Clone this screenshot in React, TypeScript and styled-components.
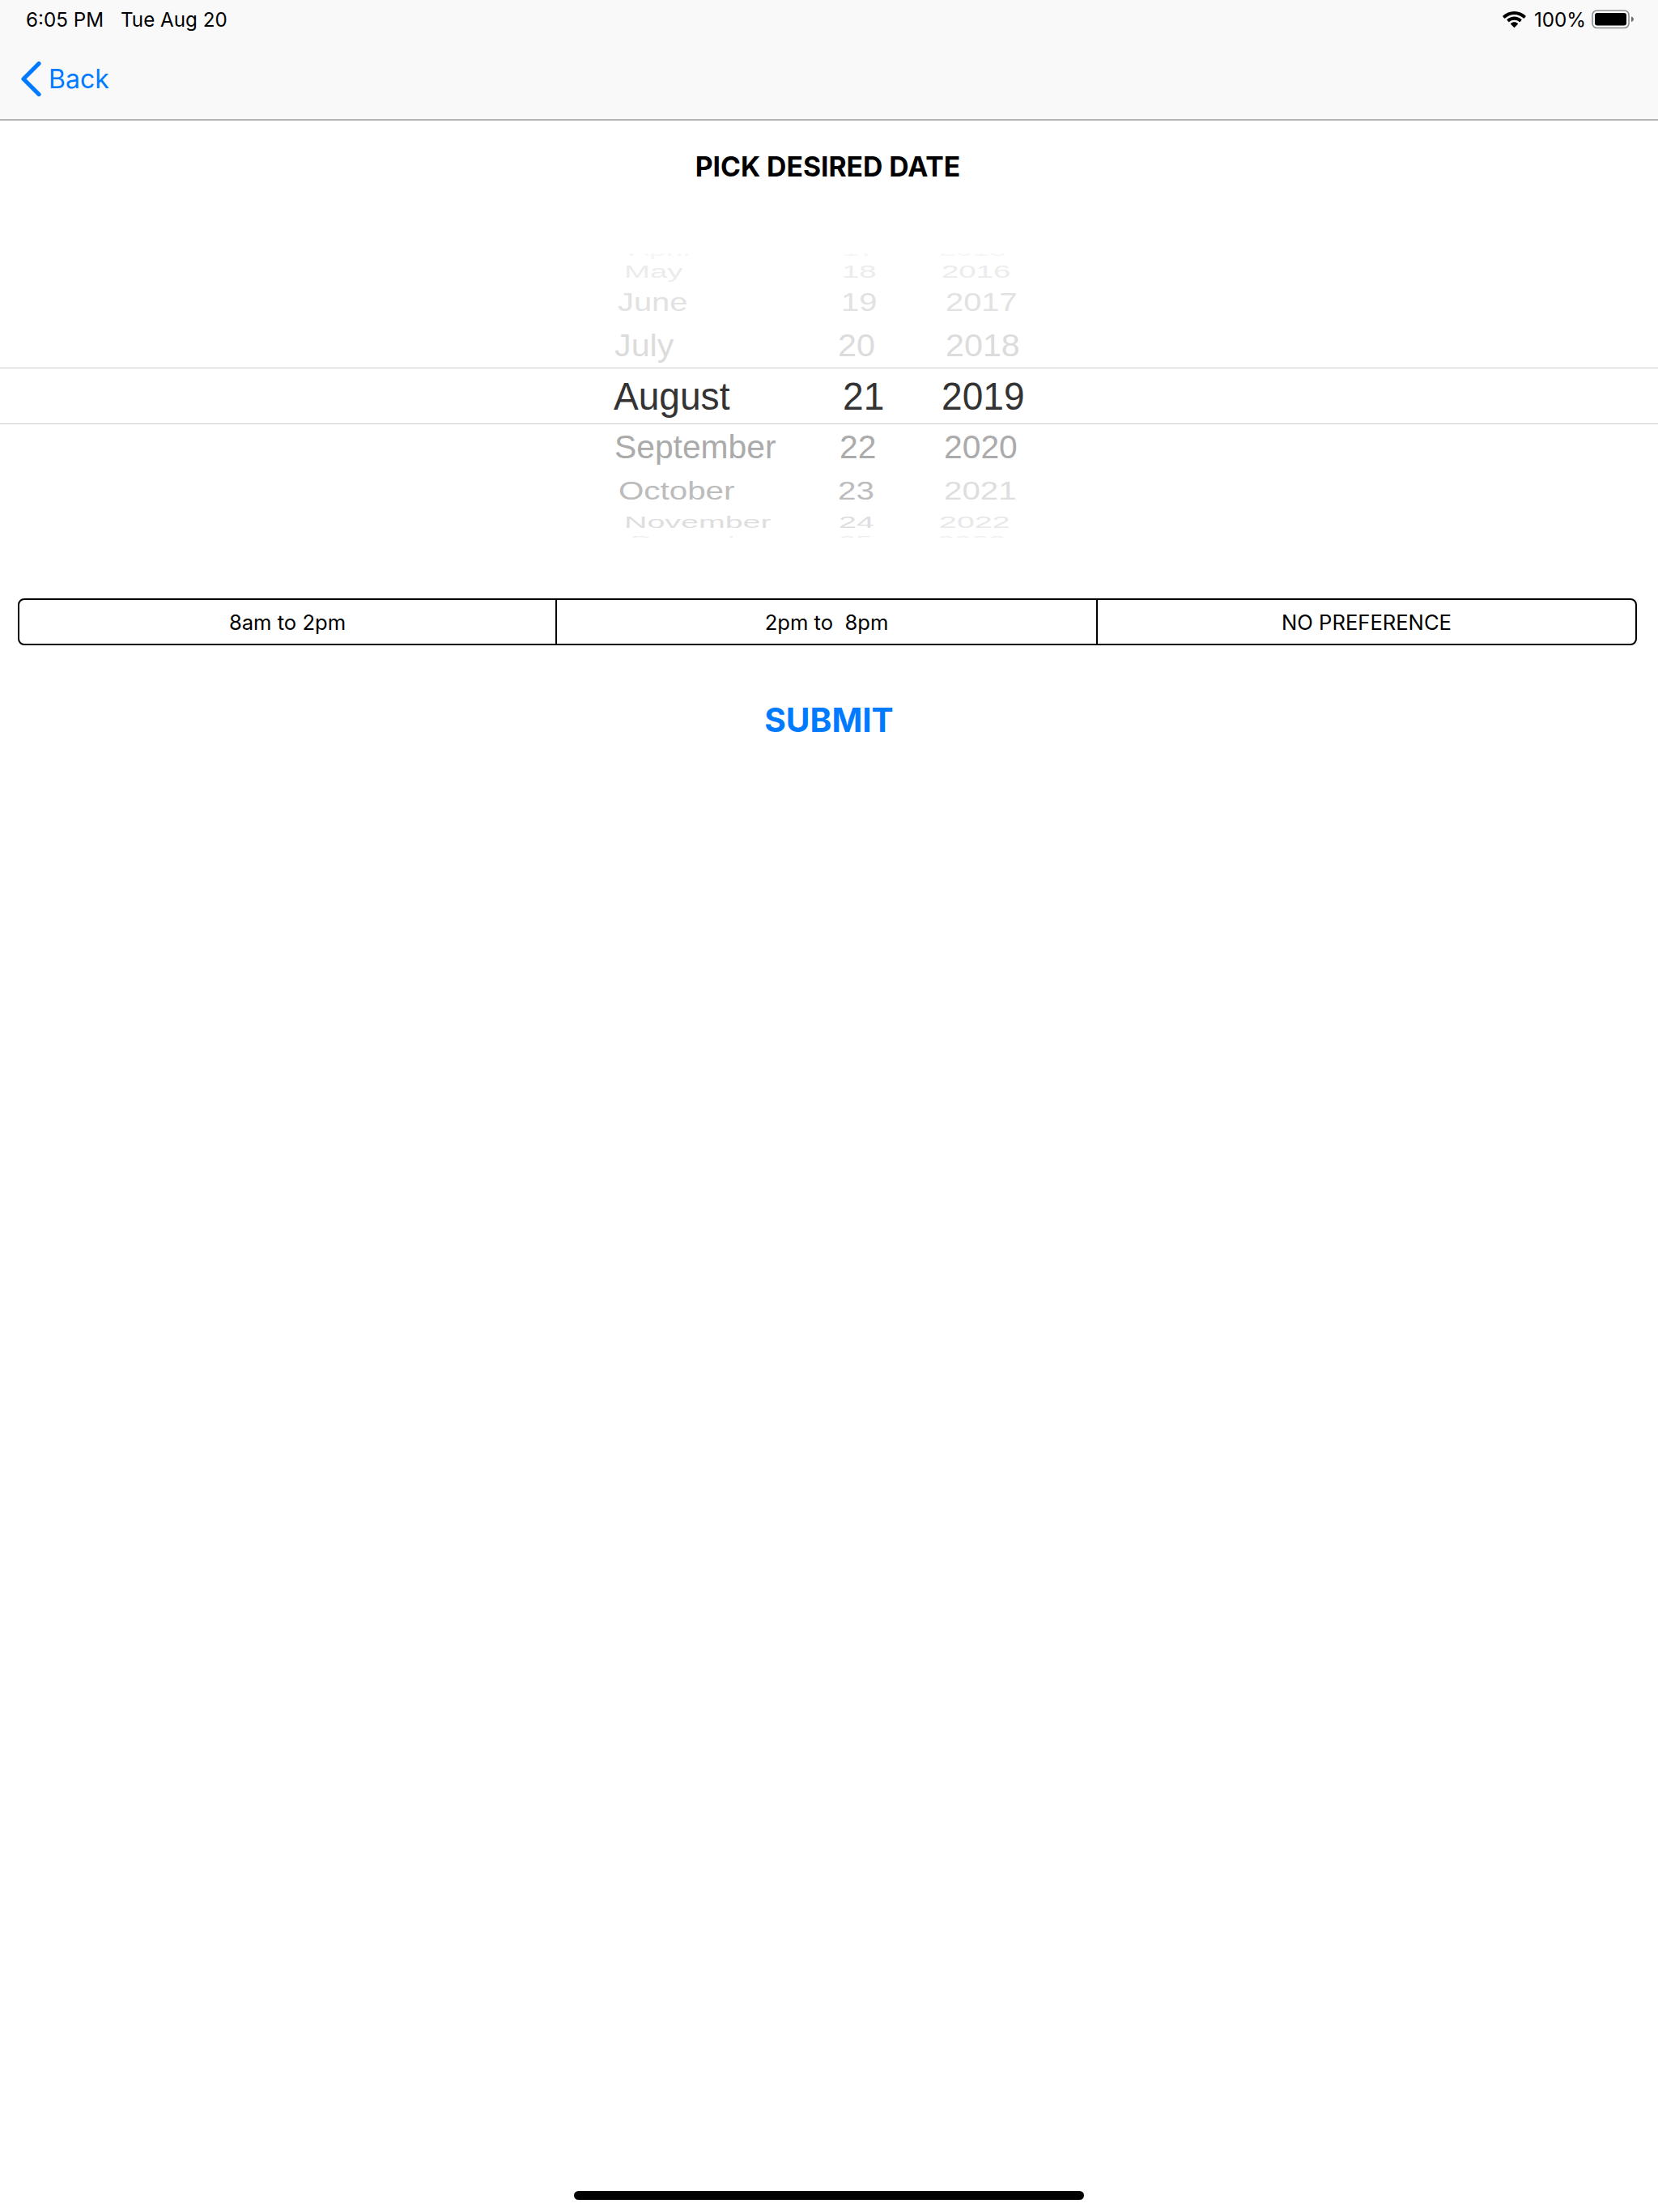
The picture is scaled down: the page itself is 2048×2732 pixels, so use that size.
import React from "react";
import styled, { createGlobalStyle } from "styled-components";

interface WheelCell {
    text: string;
    x: number;
    color: string;
}

// one entry per visible row, top to bottom: height of the row and how much the drum squeezes it
const ROW_SHAPES = [
    { height: 21, sx: 0.78, sy: 0.4 },
    { height: 32, sx: 0.8, sy: 0.44 },
    { height: 42, sx: 0.83, sy: 0.67 },
    { height: 66, sx: 0.86, sy: 0.81 },
    { height: 60, sx: 0.96, sy: 1 },
    { height: 66, sx: 0.85, sy: 0.84 },
    { height: 42, sx: 0.84, sy: 0.64 },
    { height: 33, sx: 0.82, sy: 0.41 },
    { height: 14, sx: 0.79, sy: 0.35 },
];

const MONTHS: WheelCell[] = [
    { text: "April", x: 777, color: "#f6f6f6" },
    { text: "May", x: 771, color: "#ececec" },
    { text: "June", x: 763, color: "#e2e2e2" },
    { text: "July", x: 759, color: "#dcdcdc" },
    { text: "August", x: 758, color: "#333333" },
    { text: "September", x: 759, color: "#ababab" },
    { text: "October", x: 764, color: "#bcbcbc" },
    { text: "November", x: 771, color: "#dedede" },
    { text: "December", x: 779, color: "#eeeeee" },
];

const DAYS: WheelCell[] = [
    { text: "17", x: 1040, color: "#f6f6f6" },
    { text: "18", x: 1040, color: "#ececec" },
    { text: "19", x: 1039, color: "#e2e2e2" },
    { text: "20", x: 1035, color: "#dcdcdc" },
    { text: "21", x: 1041, color: "#333333" },
    { text: "22", x: 1037, color: "#ababab" },
    { text: "23", x: 1035, color: "#bcbcbc" },
    { text: "24", x: 1036, color: "#dedede" },
    { text: "25", x: 1036, color: "#eeeeee" },
];

const YEARS: WheelCell[] = [
    { text: "2015", x: 1160, color: "#f6f6f6" },
    { text: "2016", x: 1163, color: "#ececec" },
    { text: "2017", x: 1168, color: "#e2e2e2" },
    { text: "2018", x: 1168, color: "#dcdcdc" },
    { text: "2019", x: 1163, color: "#333333" },
    { text: "2020", x: 1166, color: "#ababab" },
    { text: "2021", x: 1166, color: "#dedede" },
    { text: "2022", x: 1160, color: "#e8e8e8" },
    { text: "2023", x: 1158, color: "#f0f0f0" },
];

const WHEEL_START = 750;

const WHEELS = [
    { cells: MONTHS, start: WHEEL_START, width: 280 },
    { cells: DAYS, start: WHEEL_START + 280, width: 120 },
    { cells: YEARS, start: WHEEL_START + 400, width: 200 },
];

const SHIFTS = ["8am to 2pm", "2pm to  8pm", "NO PREFERENCE"];

const WifiIcon = () => (
    <svg width="29" height="20" viewBox="0 0 29 20" fill="#000">
        <path d="M14.5 0C9 0 4.1 2.1 .4 5.6c-.3.3-.3.7 0 1l1.8 1.9c.3.3.7.3 1 0C6.2 5.6 10.1 3.9 14.5 3.9s8.300 1.700 11.300 4.600c.3.3.7.3 1 0l1.800-1.900c.3-.3.3-.7 0-1C24.900 2.100 20 0 14.500 0z" />
        <path d="M14.500 6.600c-3.400 0-6.500 1.300-8.900 3.500-.3.300-.3.700 0 1l1.800 1.900c.3.300.7.300 1 0 1.600-1.400 3.700-2.300 6.100-2.300s4.500.9 6.100 2.300c.3.300.7.300 1 0l1.800-1.900c.3-.3.3-.7 0-1-2.400-2.200-5.500-3.500-8.900-3.500z" />
        <path d="M14.500 13.300c-1.700 0-3.200.6-4.300 1.600-.3.300-.3.700 0 1l3.800 3.900c.3.300.7.300 1 0l3.800-3.900c.3-.3.3-.7 0-1-1.100-1-2.600-1.600-4.300-1.600z" />
    </svg>
);

const BatteryIcon = () => (
    <svg width="53" height="24" viewBox="0 0 53 24">
        <rect x="1" y="1" width="45" height="21.500" rx="5.500" fill="none" stroke="#8e8e8e" strokeWidth="1.600" />
        <rect x="4" y="4" width="39" height="15.500" rx="3" fill="#000" />
        <path d="M49 8.500c1.800.5 3 1.700 3 3.300s-1.200 2.800-3 3.300z" fill="#6f6f6f" />
    </svg>
);

const BackChevron = () => (
    <svg width="26" height="43" viewBox="0 0 26 43" fill="none">
        <path d="M23 2.500 4 21.500l19 19" stroke="#007aff" strokeWidth="5.200" strokeLinecap="round" strokeLinejoin="round" />
    </svg>
);

const App = () => {
    return (
        <StyledPage>
            <GlobalStyle />
            <StyledHeader>
                <StyledStatusBar>
                    <StyledClock>
                        <span>6:05 PM</span>
                        <span>Tue Aug 20</span>
                    </StyledClock>
                    <StyledStatusRight>
                        <WifiIcon />
                        <StyledPercent>100%</StyledPercent>
                        <BatteryIcon />
                    </StyledStatusRight>
                </StyledStatusBar>
                <StyledNavBar>
                    <BackChevron />
                    <StyledBackLabel>Back</StyledBackLabel>
                </StyledNavBar>
            </StyledHeader>

            <StyledTitle>PICK DESIRED DATE</StyledTitle>

            <StyledWheelWrap>
                <StyledSelectionBand />
                {WHEELS.map((wheel) => (
                    <StyledWheel key={wheel.start} $width={wheel.width}>
                        {wheel.cells.map((cell, index) => (
                            <StyledWheelRow
                                key={cell.text}
                                $height={ROW_SHAPES[index].height}
                                $inset={cell.x - wheel.start}
                            >
                                <StyledWheelText
                                    $color={cell.color}
                                    $sx={ROW_SHAPES[index].sx}
                                    $sy={ROW_SHAPES[index].sy}
                                >
                                    {cell.text}
                                </StyledWheelText>
                            </StyledWheelRow>
                        ))}
                    </StyledWheel>
                ))}
            </StyledWheelWrap>

            <StyledSegments>
                {SHIFTS.map((shift) => (
                    <StyledSegment key={shift}>{shift}</StyledSegment>
                ))}
            </StyledSegments>

            <StyledSubmit>SUBMIT</StyledSubmit>

            <StyledHomeIndicator />
        </StyledPage>
    );
};

export default App;

const GlobalStyle = createGlobalStyle`
    html, body {
        margin: 0;
        padding: 0;
        background: #ffffff;
    }
    * {
        box-sizing: border-box;
    }
`;

const StyledPage = styled.div`
    width: 2048px;
    height: 2732px;
    display: flex;
    flex-direction: column;
    overflow: hidden;
    background: #ffffff;
    font-family: Inter, "Liberation Sans", sans-serif;
`;

const StyledHeader = styled.header`
    height: 149px;
    flex-shrink: 0;
    background: #f9f9f9;
    border-bottom: 2px solid #b4b4b4;
`;

const StyledStatusBar = styled.div`
    height: 48px;
    padding: 0 29px 0 32px;
    display: flex;
    align-items: center;
    justify-content: space-between;
    color: #000000;
    font-size: 24.2px;
`;

const StyledClock = styled.div`
    display: flex;
    gap: 21px;
`;

const StyledStatusRight = styled.div`
    display: flex;
    align-items: center;
    gap: 7px;
`;

const StyledPercent = styled.span`
    margin-left: 3px;
`;

const StyledNavBar = styled.div`
    height: 98px;
    padding: 0 0 0 25px;
    display: flex;
    align-items: center;
    gap: 9px;
`;

const StyledBackLabel = styled.span`
    color: #007aff;
    font-size: 32px;
`;

const StyledTitle = styled.h1`
    margin: 36px 0 0;
    height: 42px;
    padding-right: 3px;
    line-height: 42px;
    text-align: center;
    color: #000000;
    font-size: 33.7px;
    font-weight: 700;
`;

const StyledWheelWrap = styled.div`
    position: relative;
    height: 351px;
    margin-top: 86px;
    padding-left: ${WHEEL_START}px;
    display: flex;
    overflow: hidden;
    font-family: "Liberation Sans", Arial, sans-serif;
`;

const StyledSelectionBand = styled.div`
    position: absolute;
    left: 0;
    right: 0;
    top: 141px;
    height: 70px;
    border-top: 1px solid #cccccc;
    border-bottom: 1px solid #cccccc;
`;

const StyledWheel = styled.div<{ $width: number }>`
    width: ${({ $width }) => $width}px;
    margin-top: -14px;
    flex-shrink: 0;
`;

const StyledWheelRow = styled.div<{ $height: number; $inset: number }>`
    height: ${({ $height }) => $height}px;
    padding-left: ${({ $inset }) => $inset}px;
    display: flex;
    align-items: center;
    white-space: nowrap;
`;

const StyledWheelText = styled.span<{ $color: string; $sx: number; $sy: number }>`
    display: inline-block;
    color: ${({ $color }) => $color};
    font-size: 48px;
    line-height: 48px;
    transform: scale(${({ $sx }) => $sx}, ${({ $sy }) => $sy});
    transform-origin: left center;
`;

const StyledSegments = styled.div`
    height: 58px;
    margin: 75px 26px 0 22px;
    display: grid;
    grid-template-columns: 664px 668px 1fr;
    border: 2px solid #000000;
    border-radius: 8px;
`;

const StyledSegment = styled.div`
    display: flex;
    align-items: center;
    justify-content: center;
    color: #000000;
    font-size: 25.6px;
    white-space: pre;

    &:not(:last-child) {
        border-right: 2px solid #000000;
    }
`;

const StyledSubmit = styled.div`
    margin-top: 69px;
    text-align: center;
    color: #007aff;
    font-size: 40.6px;
    line-height: 48px;
    font-weight: 700;
`;

const StyledHomeIndicator = styled.div`
    width: 630px;
    height: 11px;
    margin: auto auto 15px;
    background: #000000;
    border-radius: 6px;
`;
